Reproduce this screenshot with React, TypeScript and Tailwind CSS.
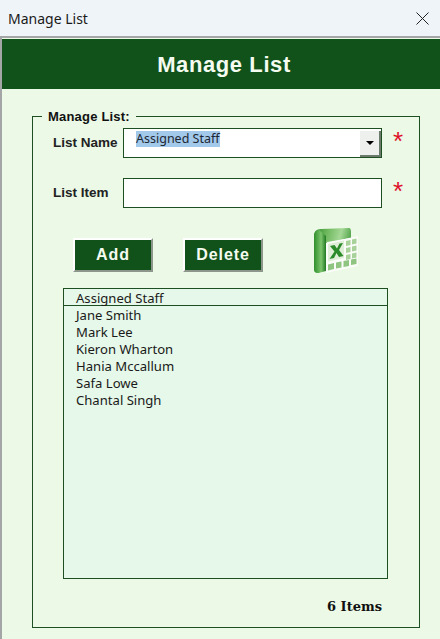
const staff = ['Jane Smith', 'Mark Lee', 'Kieron Wharton', 'Hania Mccallum', 'Safa Lowe', 'Chantal Singh'];

const ExcelIcon = () => (
  <svg width="46" height="46" viewBox="0 0 46 46">
    <defs>
      <linearGradient id="xlBody" x1="0" y1="0" x2="1" y2="0.3">
        <stop offset="0" stopColor="#2d8a2a" />
        <stop offset="0.35" stopColor="#6fb85e" />
        <stop offset="0.7" stopColor="#a5d896" />
        <stop offset="1" stopColor="#4ba044" />
      </linearGradient>
      <linearGradient id="xlLeft" x1="0" y1="0" x2="1" y2="0">
        <stop offset="0" stopColor="#2f8f2c" />
        <stop offset="0.6" stopColor="#7cc46c" />
        <stop offset="1" stopColor="#1f7a22" />
      </linearGradient>
    </defs>
    <path d="M8 1 L36 0 Q38 0 38 4 L38 10 L14 14 L14 42 L5 45 Q1 45 1 41 L1 8 Q1 1 8 1 Z" fill="url(#xlBody)" />
    <path d="M1 8 Q1 3 6 2 L13 8 L13 43 L5 45 Q1 45 1 41 Z" fill="url(#xlLeft)" />
    <path d="M13 15 L45 8 L45 38 L13 45 Z" fill="#fafcf8" />
    <path d="M15 16 L31 12.5 L31 30 L15 33.5 Z" fill="#dfeed7" />
    <path d="M17 18 L21.5 17 L24 20.5 L26.5 15.5 L30 15 L26 22 L30.5 28 L26 29 L23.5 25 L21 30 L16.5 31 L21.5 23.5 Z" fill="#2b8a2a" />
    <path d="M33 13 L37.5 12 L37.5 17 L33 18 Z M39 11.5 L43.5 10.5 L43.5 15.5 L39 16.5 Z M33 20 L37.5 19 L37.5 24 L33 25 Z M39 18.5 L43.5 17.5 L43.5 22.5 L39 23.5 Z M33 27 L37.5 26 L37.5 31 L33 32 Z M39 25.5 L43.5 24.5 L43.5 29.5 L39 30.5 Z" fill="#a8d29a" />
    <path d="M15 36.5 L21 35 L21 41 L15 42.5 Z M23 34.5 L28.5 33.5 L28.5 39.5 L23 40.5 Z M30.5 33 L36 32 L36 38 L30.5 39 Z M38 31.5 L43.5 30.5 L43.5 36 L38 37 Z" fill="#8fc481" />
  </svg>
);

const ActionButton = ({ label, className }: { label: string; className: string }) => (
  <button
    className={`${className} h-[34px] bg-[#11521a] text-[#f4fbf0] text-[16px] font-bold tracking-[0.9px] border-2 border-t-white border-l-white border-r-[#8d968b] border-b-[#8d968b] font-['Liberation_Sans',sans-serif]`}
  >
    {label}
  </button>
);

const App = () => {
  return (
    <div className="w-[440px] h-[639px] overflow-hidden flex flex-col bg-[#ebf9e6] font-['Noto_Sans',sans-serif] text-[#111]">
      <div className="h-[36px] flex-none flex items-center justify-between pl-2 pr-[11px] bg-[#eff4f9] border-b-2 border-[#a3a5a6] box-content text-[14px] text-[#1a1a1a]">
        <span>Manage List</span>
        <svg width="13" height="13" viewBox="0 0 13 13" stroke="#222" strokeWidth="1" fill="none">
          <path d="M0.5 0.5 L12.5 12.5 M12.5 0.5 L0.5 12.5" />
        </svg>
      </div>
      <div className="flex-1 flex flex-col border-l-2 border-[#a3a5a6] min-h-0">
        <div className="h-[50px] flex-none mt-px pl-[6px] flex items-center justify-center bg-[#11521a] text-[#f4fbf0] text-[22px] font-bold tracking-[0.6px] font-['Liberation_Sans',sans-serif]">
          Manage List
        </div>
        <fieldset className="ml-[30px] mr-5 mt-[21px] h-[518px] border border-[#1d4f22] px-[30px] pb-0 min-w-0">
          <legend className="-ml-[21px] px-[6px] text-[13px] leading-[13px] font-bold text-[#111] font-['Liberation_Sans',sans-serif] tracking-[0.2px]">
            Manage List:
          </legend>
          <div className="mt-[5px] flex items-center h-[30px] -ml-[10px]">
            <label className="w-[70px] flex-none text-[13.5px] font-bold font-['Liberation_Sans',sans-serif] text-[#222]">List Name</label>
            <div className="relative w-[259px] h-[30px] flex-none bg-white border border-[#1d4f22] pl-3 pt-[2px]">
              <span className="block w-fit h-[16px] bg-[#a3c9ea] text-[12.5px] leading-[15px] text-[#1d2733]">Assigned Staff</span>
              <div className="absolute right-0 bottom-0 w-[21px] h-[26px] flex items-center justify-center bg-[#eef0ee] border-r-2 border-b-2 border-[#6b7b6b]">
                <div className="w-0 h-0 border-x-[4px] border-x-transparent border-t-[4px] border-t-black" />
              </div>
            </div>
            <span className="ml-[11px] -mt-[5px] text-[#e0102a] text-[26px] leading-none font-['Liberation_Sans',sans-serif]">*</span>
          </div>
          <div className="mt-[20px] flex items-center h-[30px] -ml-[10px]">
            <label className="w-[70px] flex-none text-[13.5px] font-bold font-['Liberation_Sans',sans-serif] text-[#222]">List Item</label>
            <input className="w-[259px] h-[30px] flex-none bg-white border border-[#1d4f22]" />
            <span className="ml-[11px] -mt-[5px] text-[#e0102a] text-[26px] leading-none font-['Liberation_Sans',sans-serif]">*</span>
          </div>
          <div className="mt-[30px] h-[34px] flex items-start">
            <ActionButton label="Add" className="w-[80px] ml-[10px]" />
            <ActionButton label="Delete" className="w-[80px] ml-[30px]" />
            <div className="ml-[50px] -mt-[10px]"><ExcelIcon /></div>
          </div>
          <div className="mt-[16px] w-[325px] h-[291px] bg-[#e6f8e9] border border-[#1d4f22] text-[13.1px] leading-[17px] text-[#1a1a1a]">
            <div className="h-[17px] pl-3 border-b border-[#1d4f22] leading-[18px]">Assigned Staff</div>
            <ul className="pl-3 pt-[1px]">
              {staff.map((name) => (
                <li key={name}>{name}</li>
              ))}
            </ul>
          </div>
          <p className="mt-[18px] w-[319px] text-right text-[13px] font-bold font-['DejaVu_Serif',serif] text-[#111]">6 Items</p>
        </fieldset>
      </div>
    </div>
  );
};

export default App;
